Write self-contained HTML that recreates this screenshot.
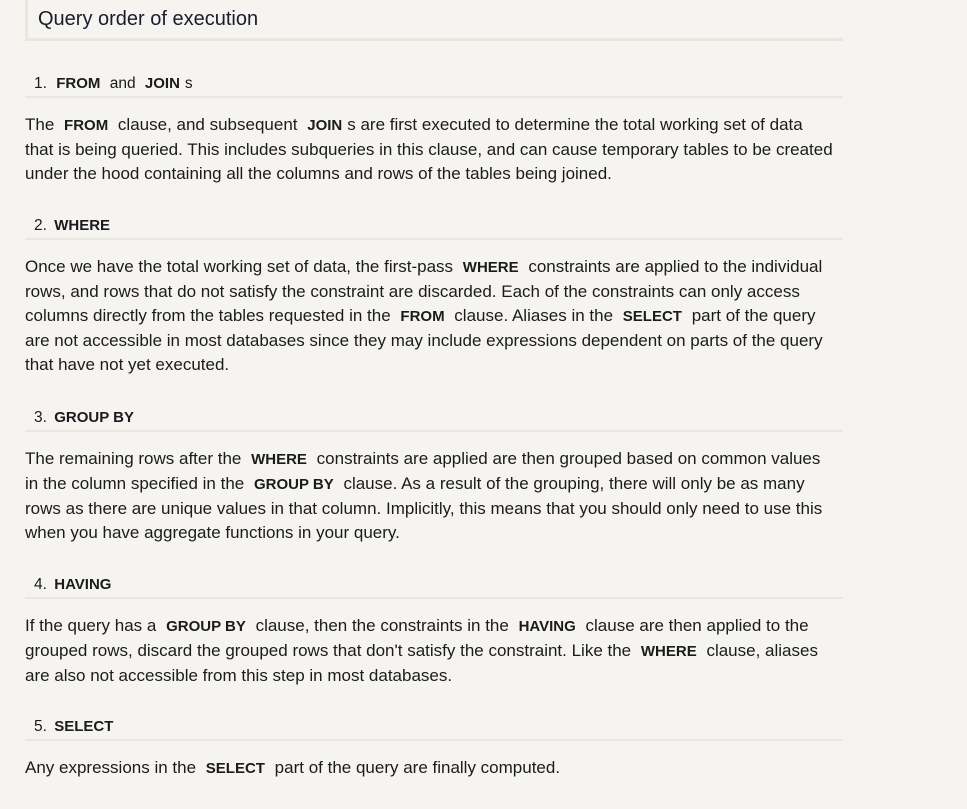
<!DOCTYPE html>
<html><head><meta charset="utf-8"><style>
html,body{margin:0;padding:0;background:#f5f4f0;width:967px;height:809px;overflow:hidden}
body{font-family:"Liberation Sans",sans-serif;color:#1b1b1b;position:relative}
.title{position:absolute;left:25px;top:0;width:815px;height:38px;border-left:3px solid #e8e7de;border-bottom:3px solid #e8e7de}
.title span{position:absolute;left:10px;top:8px;font-size:20px;color:#1c1c2c}
.h{position:absolute;left:25px;width:818px;border-bottom:2px solid #e9e8df;font-size:15.5px;padding-left:9px;box-sizing:border-box;height:24px;line-height:20px}
.p{position:absolute;left:25px;font-size:17px;line-height:24px;white-space:nowrap}
b{font-weight:bold;padding:0 5px;font-size:15px}
</style></head><body>
<div class="title"><span>Query order of execution</span></div>

<div class="h" style="top:74px">1. <b>FROM</b> and <b>JOIN</b>s</div>
<div class="p" style="top:113px">The <b>FROM</b> clause, and subsequent <b>JOIN</b>s are first executed to determine the total working set of data<br>that is being queried. This includes subqueries in this clause, and can cause temporary tables to be created<br>under the hood containing all the columns and rows of the tables being joined.</div>

<div class="h" style="top:216px">2. <b style="padding-left:3px">WHERE</b></div>
<div class="p" style="top:255px">Once we have the total working set of data, the first-pass <b>WHERE</b> constraints are applied to the individual<br>rows, and rows that do not satisfy the constraint are discarded. Each of the constraints can only access<br>columns directly from the tables requested in the <b>FROM</b> clause. Aliases in the <b>SELECT</b> part of the query<br>are not accessible in most databases since they may include expressions dependent on parts of the query<br>that have not yet executed.</div>

<div class="h" style="top:408px">3. <b style="padding-left:3px">GROUP BY</b></div>
<div class="p" style="top:447px">The remaining rows after the <b>WHERE</b> constraints are applied are then grouped based on common values<br>in the column specified in the <b>GROUP BY</b> clause. As a result of the grouping, there will only be as many<br>rows as there are unique values in that column. Implicitly, this means that you should only need to use this<br>when you have aggregate functions in your query.</div>

<div class="h" style="top:575px">4. <b style="padding-left:3px">HAVING</b></div>
<div class="p" style="top:614px">If the query has a <b>GROUP BY</b> clause, then the constraints in the <b>HAVING</b> clause are then applied to the<br>grouped rows, discard the grouped rows that don't satisfy the constraint. Like the <b>WHERE</b> clause, aliases<br>are also not accessible from this step in most databases.</div>

<div class="h" style="top:717px">5. <b style="padding-left:3px">SELECT</b></div>
<div class="p" style="top:756px">Any expressions in the <b>SELECT</b> part of the query are finally computed.</div>
</body></html>
